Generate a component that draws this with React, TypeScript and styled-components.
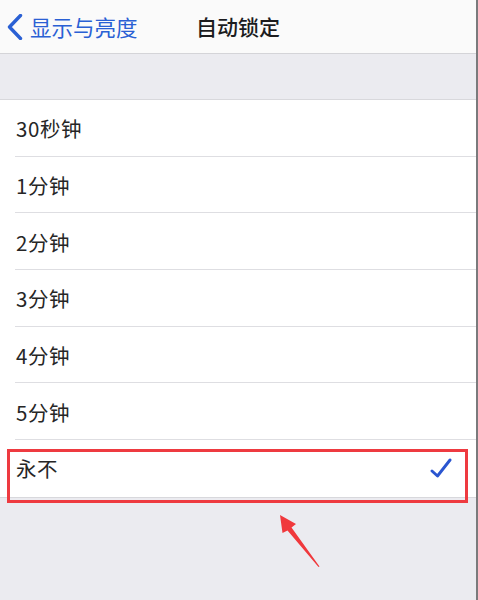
import styled, { createGlobalStyle } from 'styled-components';

const GlobalStyle = createGlobalStyle`
  html, body {
    margin: 0;
    padding: 0;
    background: #ebebf0;
  }
  body {
    font-family: "Noto Sans CJK SC", "Noto Sans", sans-serif;
  }
`;

const Screen = styled.div`
  position: relative;
  width: 478px;
  height: 600px;
  box-sizing: border-box;
  background: #ebebf0;
  border-right: 2px solid #7a7a7c;
  overflow: hidden;
`;

const NavBar = styled.header`
  height: 53px;
  display: grid;
  grid-template-columns: 1fr auto 1fr;
  align-items: center;
  background: #fafafa;
  border-bottom: 1px solid #d4d4d8;
`;

const BackButton = styled.div`
  display: flex;
  align-items: center;
  gap: 7px;
  padding-left: 7px;
  color: #2a60d4;
  font-size: 21.5px;
  line-height: 1;
  margin-top: 1px;
`;

const Title = styled.h1`
  margin: 0;
  font-size: 21px;
  font-weight: 500;
  color: #1c1c1e;
  line-height: 1;
`;

const Spacer = styled.div`
  height: 45px;
  border-bottom: 1px solid #d8d8dc;
`;

const List = styled.ul`
  list-style: none;
  margin: 0;
  padding: 0;
  background: #fff;
  border-bottom: 1px solid #d8d8dc;
`;

const Row = styled.li`
  height: 56.7px;
  display: flex;
  align-items: center;
  justify-content: space-between;
  padding: 0 24px 0 16px;
  position: relative;
  box-sizing: border-box;
  font-size: 20.5px;
  letter-spacing: 0.6px;
  color: #262626;

  &:not(:last-child)::after {
    content: '';
    position: absolute;
    left: 15px;
    right: 0;
    bottom: 0;
    height: 1px;
    background: #dedee2;
  }
`;

const Highlight = styled.div`
  position: absolute;
  left: 7px;
  top: 449px;
  width: 461px;
  height: 54px;
  box-sizing: border-box;
  border: 3px solid #ee3a40;
  pointer-events: none;
`;

const Arrow = styled.svg`
  position: absolute;
  left: 270px;
  top: 505px;
  pointer-events: none;
`;

const options = ['30秒钟', '1分钟', '2分钟', '3分钟', '4分钟', '5分钟', '永不'];
const selected = '永不';

function Chevron() {
  return (
    <svg width="16" height="26" viewBox="0 0 16 26">
      <path
        d="M13.5 1.5 L2.5 13 L13.5 24.5"
        fill="none"
        stroke="#2a60d4"
        strokeWidth="3.4"
        strokeLinecap="round"
        strokeLinejoin="round"
      />
    </svg>
  );
}

function Check() {
  return (
    <svg width="22" height="20" viewBox="0 0 22 20">
      <path
        d="M2 13 L7.5 18 L20 2"
        fill="none"
        stroke="#2a55d0"
        strokeWidth="2.9"
        strokeLinecap="round"
        strokeLinejoin="round"
      />
    </svg>
  );
}

export default function App() {
  return (
    <>
      <GlobalStyle />
      <Screen>
        <NavBar>
          <BackButton>
            <Chevron />
            显示与亮度
          </BackButton>
          <Title>自动锁定</Title>
          <div />
        </NavBar>
        <Spacer />
        <List>
          {options.map(o => (
            <Row key={o}>
              {o}
              {o === selected && <Check />}
            </Row>
          ))}
        </List>
        <Highlight />
        <Arrow width="60" height="70" viewBox="0 0 60 70">
          <polygon points="10,10 12.5,28 17.5,25.5 48.5,62 49.5,61.5 21.5,22.5 26,19" fill="#f0383c" />
        </Arrow>
      </Screen>
    </>
  );
}
